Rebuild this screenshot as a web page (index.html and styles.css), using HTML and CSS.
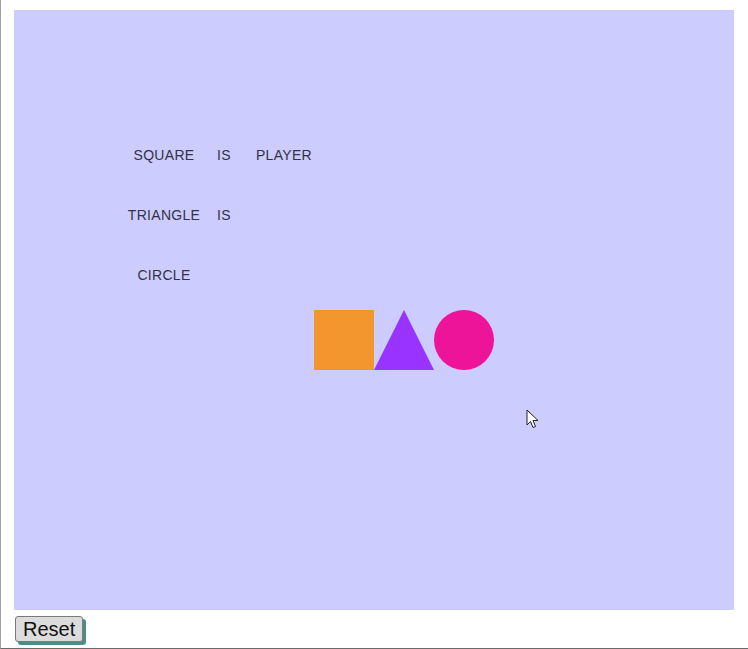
FILE: index.html
```html
<!DOCTYPE html>
<html>
<head>
<meta charset="utf-8">
<link rel="stylesheet" href="styles.css">
</head>
<body>
<div class="frame">
  <div class="board">
    <div class="word r3 c3">SQUARE</div>
    <div class="word r3 c4">IS</div>
    <div class="word r3 c5">PLAYER</div>
    <div class="word r4 c3">TRIANGLE</div>
    <div class="word r4 c4">IS</div>
    <div class="word r5 c3">CIRCLE</div>
    <div class="shape r6 c6 square"></div>
    <div class="shape r6 c7"><svg width="60" height="60" viewBox="0 0 60 60"><polygon points="30,0 60,60 0,60" fill="#9933ff"/></svg></div>
    <div class="shape r6 c8 circle"></div>
    <svg class="cursor" width="14" height="21" viewBox="0 0 14 21"><path d="M1 1 L1 16 L4.5 12.5 L7 18.5 L9.5 17.5 L7 11.5 L12 11.5 Z" fill="#fff" stroke="#222" stroke-width="1" stroke-linejoin="miter"/></svg>
  </div>
  <button class="reset">Reset</button>
</div>
</body>
</html>
```
FILE: styles.css
```css
html, body {
  margin: 0;
  padding: 0;
  background: #ffffff;
}
.frame {
  box-sizing: border-box;
  width: 748px;
  height: 649px;
  border-left: 1px solid #a0a0a0;
  border-bottom: 1px solid #6a6a6a;
  padding: 10px 0 0 13px;
}
.board {
  position: relative;
  width: 720px;
  height: 600px;
  background: #ccccff;
  display: grid;
  grid-template-columns: repeat(12, 60px);
  grid-template-rows: repeat(10, 60px);
}
.word {
  display: flex;
  justify-content: center;
  align-items: flex-start;
  font-family: "Liberation Sans", Arial, sans-serif;
  font-size: 14px;
  letter-spacing: 0.3px;
  color: #333344;
  padding-top: 17px;
  white-space: nowrap;
}
.r3 { grid-row: 3; }
.r4 { grid-row: 4; }
.r5 { grid-row: 5; }
.r6 { grid-row: 6; }
.c3 { grid-column: 3; }
.c4 { grid-column: 4; }
.c5 { grid-column: 5; }
.c6 { grid-column: 6; }
.c7 { grid-column: 7; }
.c8 { grid-column: 8; }
.shape svg { display: block; }
.square { background: #f4962e; }
.circle { background: #ee1499; border-radius: 50%; }
.cursor {
  position: absolute;
  left: 512px;
  top: 399px;
}
.reset {
  display: block;
  margin-top: 6px;
  margin-left: 1px;
  font-family: "Liberation Sans", Arial, sans-serif;
  font-size: 20px;
  line-height: 22px;
  color: #111;
  background: #dcdcdc;
  border: 1px solid #7a7a7a;
  border-radius: 3px;
  padding: 1px 7px 1px 7px;
  box-shadow: 3px 3px 0 #4e8c88;
}
```
